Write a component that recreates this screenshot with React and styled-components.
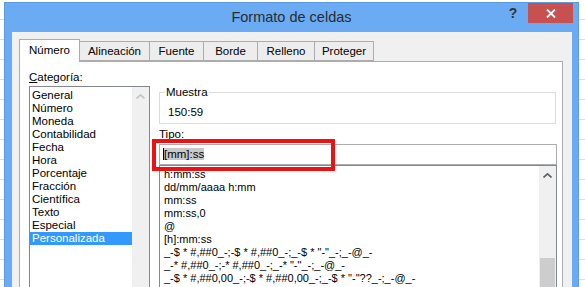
import React from 'react'
import styled, { createGlobalStyle } from 'styled-components'

const GlobalStyle = createGlobalStyle`
  html, body {
    margin: 0;
    height: 287px;
    overflow: hidden;
  }
  body {
    box-sizing: border-box;
    padding: 2px 6px 0 4px;
    font-family: "Liberation Sans", Arial, sans-serif;
    font-size: 11.5px;
    color: #000;
    background-color: #fff;
    background-image: repeating-linear-gradient(to bottom, transparent 0, transparent 19px, #dadcdd 19px, #dadcdd 20px);
  }
`

const Dialog = styled.div`
  height: 300px;
  background: #6aabf4;
  border: 1px solid #5c9be3;
  display: flex;
  flex-direction: column;
`

const TitleBar = styled.div`
  flex: none;
  height: 29px;
  display: grid;
  grid-template-columns: 1fr auto 1fr;
  align-items: start;
`

const Title = styled.div`
  grid-column: 2;
  font-size: 14.5px;
  line-height: 28px;
  color: #2b2b2b;
`

const Controls = styled.div`
  grid-column: 3;
  justify-self: end;
  display: flex;
  align-items: flex-start;
`

const HelpButton = styled.div`
  width: 24px;
  height: 20px;
  margin-right: 3px;
  display: flex;
  align-items: center;
  justify-content: center;
  font-weight: bold;
  font-size: 14px;
  color: #333;
`

const CloseButton = styled.div`
  width: 45px;
  height: 20px;
  margin-right: 5px;
  background: #c75050;
  display: flex;
  align-items: center;
  justify-content: center;
`

const Body = styled.div`
  flex: 1;
  margin: 0 6px 0 7px;
  padding: 7px 9px 0 7px;
  background: #f0f0f0;
  display: flex;
  flex-direction: column;
`

const TabRow = styled.div`
  flex: none;
  height: 22px;
  display: flex;
  align-items: flex-end;
  position: relative;
  z-index: 1;
`

const Tab = styled.div`
  box-sizing: border-box;
  width: ${p => p.$w}px;
  height: ${p => (p.$active ? 23 : 20)}px;
  margin-bottom: ${p => (p.$active ? -1 : 0)}px;
  margin-left: -1px;
  border: 1px solid #acacac;
  border-bottom: ${p => (p.$active ? 'none' : '1px solid #acacac')};
  background: ${p => (p.$active ? '#fff' : '#ededed')};
  display: flex;
  align-items: center;
  justify-content: center;
  padding-bottom: ${p => (p.$active ? 3 : 0)}px;
  &:first-child {
    margin-left: 0;
  }
`

const Panel = styled.div`
  flex: 1;
  background: #fff;
  border: 1px solid #acacac;
  padding: 8px 5px 0 9px;
  display: flex;
  gap: 9px;
`

const LeftCol = styled.div`
  width: 121px;
  display: flex;
  flex-direction: column;
`

const FieldLabel = styled.div`
  line-height: 15px;
  margin-bottom: ${p => p.$mb || 0}px;
  margin-top: ${p => p.$mt || 0}px;
`

const ListBox = styled.div`
  display: flex;
  border: 1px solid #828790;
  height: ${p => p.$h}px;
`

const Items = styled.div`
  flex: 1;
  padding: 2px 0 0 ${p => p.$pl || 0}px;
  overflow: hidden;
  white-space: nowrap;
  font-size: ${p => p.$fs || 11.5}px;
`

const Item = styled.div`
  line-height: 13px;
  padding-left: 2px;
  background: ${p => (p.$selected ? '#3399ff' : 'transparent')};
  color: ${p => (p.$selected ? '#fff' : '#000')};
`

const TypeItem = styled.div`
  line-height: 13px;
`

const ScrollBar = styled.div`
  width: 17px;
  background: #f0f0f0;
  display: flex;
  flex-direction: column;
  align-items: center;
`

const Arrow = styled.svg`
  margin-top: 7px;
  flex: none;
`

const Thumb = styled.div`
  width: 15px;
  margin-top: 80px;
  margin-right: 1px;
  flex: 1;
  background: #cdcdcd;
`

const RightCol = styled.div`
  flex: 1;
  margin-top: 16px;
  display: flex;
  flex-direction: column;
`

const Group = styled.fieldset`
  margin: 0 1px 0 0;
  padding: 6px 8px 3px 5px;
  border: 1px solid #dcdcdc;
  min-width: 0;
`

const Legend = styled.legend`
  padding: 0 1px;
  line-height: 13px;
`

const Sample = styled.div`
  line-height: 15px;
  padding-left: 3px;
`

const TypeInput = styled.div`
  position: relative;
  box-sizing: border-box;
  height: 21px;
  border: 1px solid #abadb3;
  padding: 2px 3px;
  line-height: 15px;
`

const Selection = styled.span`
  background: #c8c8c8;
  border-left: 1px solid #000;
`

const RedMark = styled.div`
  position: absolute;
  left: -8px;
  top: -6px;
  width: 183px;
  height: 32px;
  box-sizing: border-box;
  border: 4px solid #ee1111;
  pointer-events: none;
`

const tabs = [
  ['Número', 61],
  ['Alineación', 71],
  ['Fuente', 55],
  ['Borde', 55],
  ['Relleno', 58],
  ['Proteger', 60],
]

const categories = [
  'General', 'Número', 'Moneda', 'Contabilidad', 'Fecha', 'Hora',
  'Porcentaje', 'Fracción', 'Científica', 'Texto', 'Especial', 'Personalizada',
]

const formats = [
  'h:mm:ss',
  'dd/mm/aaaa h:mm',
  'mm:ss',
  'mm:ss,0',
  '@',
  '[h]:mm:ss',
  '_-$ * #,##0_-;-$ * #,##0_-;_-$ * "-"_-;_-@_-',
  '_-* #,##0_-;-* #,##0_-;_-* "-"_-;_-@_-',
  '_-$ * #,##0,00_-;-$ * #,##0,00_-;_-$ * "-"??_-;_-@_-',
]

function UpArrow({ color }) {
  return (
    <Arrow width="9" height="5" viewBox="0 0 9 5">
      <path d="M0.5 4.5 L4.5 0.8 L8.5 4.5" fill="none" stroke={color} strokeWidth="1.6" />
    </Arrow>
  )
}

export default function App() {
  return (
    <>
      <GlobalStyle />
      <Dialog>
        <TitleBar>
          <Title>Formato de celdas</Title>
          <Controls>
            <HelpButton>?</HelpButton>
            <CloseButton>
              <svg width="10" height="9" viewBox="0 0 10 9">
                <path d="M1 0.5 L9 8.5 M9 0.5 L1 8.5" stroke="#fff" strokeWidth="1.8" />
              </svg>
            </CloseButton>
          </Controls>
        </TitleBar>
        <Body>
          <TabRow>
            {tabs.map(([label, w], i) => (
              <Tab key={label} $w={w} $active={i === 0}>{label}</Tab>
            ))}
          </TabRow>
          <Panel>
            <LeftCol>
              <FieldLabel $mb={1}><u>C</u>ategoría:</FieldLabel>
              <ListBox $h={210}>
                <Items>
                  {categories.map(c => (
                    <Item key={c} $selected={c === 'Personalizada'}>{c}</Item>
                  ))}
                </Items>
                <ScrollBar>
                  <UpArrow color="#c4c4c4" />
                </ScrollBar>
              </ListBox>
            </LeftCol>
            <RightCol>
              <Group>
                <Legend>Muestra</Legend>
                <Sample>150:59</Sample>
              </Group>
              <FieldLabel $mt={3} $mb={2}>Tipo:</FieldLabel>
              <TypeInput>
                <Selection>[mm]:ss</Selection>
                <RedMark />
              </TypeInput>
              <ListBox $h={140}>
                <Items $pl={4} $fs={11}>
                  {formats.map(f => (
                    <TypeItem key={f}>{f}</TypeItem>
                  ))}
                </Items>
                <ScrollBar>
                  <UpArrow color="#606060" />
                  <Thumb />
                </ScrollBar>
              </ListBox>
            </RightCol>
          </Panel>
        </Body>
      </Dialog>
    </>
  )
}
